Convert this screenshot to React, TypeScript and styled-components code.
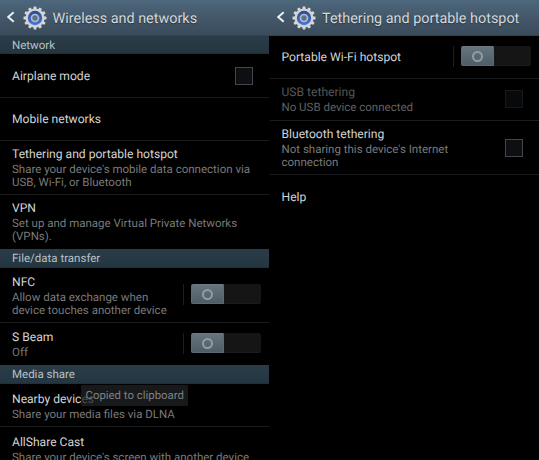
import React from 'react';
import styled, { createGlobalStyle } from 'styled-components';

const GlobalStyle = createGlobalStyle`
  * { box-sizing: border-box; }
  body {
    margin: 0;
    background: #000;
    font-family: Roboto, "Liberation Sans", sans-serif;
    text-rendering: geometricPrecision;
  }
`;

const Page = styled.main`
  position: relative;
  display: grid;
  grid-template-columns: 269px 270px;
  width: 539px;
  height: 460px;
  overflow: hidden;
  background: #000;
`;

const Panel = styled.section<{ $inset?: boolean }>`
  display: flex;
  flex-direction: column;
  padding-left: ${p => (p.$inset ? 0.5 : 0)}px;
  min-width: 0;
  overflow: hidden;
`;

const Header = styled.header<{ $inset?: boolean }>`
  flex: none;
  display: flex;
  align-items: center;
  height: 36px;
  margin-left: ${p => (p.$inset ? -0.5 : 0)}px;
  padding-left: ${p => (p.$inset ? 7.5 : 7)}px;
  background: linear-gradient(#4d677c, #44586a 50%, #3a4b5b);
  border-bottom: 1px solid #344350;
`;

const Heading = styled.h1`
  margin: 2px 0 0 6px;
  font-size: 14.4px;
  font-weight: 400;
  line-height: 20px;
  color: #d3d8dc;
  white-space: nowrap;
  text-shadow: 0 1px 1px #26323d;
`;

const SectionBar = styled.h2<{ $height: number }>`
  flex: none;
  margin: 0;
  height: ${p => p.$height}px;
  padding-left: 12px;
  background: linear-gradient(#2b3c49, #233640);
  border-bottom: 1px solid #20303a;
  font-size: 11.5px;
  font-weight: 400;
  line-height: 18px;
  color: #b9c1c5;
`;

const Row = styled.div<{ $height: number; $line?: boolean; $top: number }>`
  flex: none;
  display: flex;
  align-items: flex-start;
  height: ${p => p.$height}px;
  padding: ${p => p.$top}px 8px 0 12px;
  border-bottom: ${p => (p.$line ? '1px solid #1b1c1d' : '0')};
`;

const Copy = styled.div`
  flex: 1;
  min-width: 0;
`;

const Title = styled.div<{ $dim?: boolean }>`
  font-size: 12.1px;
  line-height: 16px;
  color: ${p => (p.$dim ? '#575757' : '#d4d4d4')};
  white-space: nowrap;
`;

const Summary = styled.div<{ $dim?: boolean }>`
  margin-top: 1px;
  font-size: 11.5px;
  line-height: 13.25px;
  color: ${p => (p.$dim ? '#626262' : '#7a7a7a')};
  white-space: pre;
`;

const Checkbox = styled.span<{ $dim?: boolean; $top: number }>`
  flex: none;
  width: 18px;
  height: 18px;
  margin: ${p => p.$top}px 8px 0 0;
  background: ${p => (p.$dim ? '#07090b' : '#0d0f12')};
  border: 1px solid ${p => (p.$dim ? '#17191b' : '#43474b')};
`;

const SwitchArea = styled.div<{ $top: number }>`
  flex: none;
  display: flex;
  width: 78px;
  height: 21px;
  margin-top: ${p => p.$top}px;
  border-left: 1px solid #1c1e20;
  padding-left: 7px;
`;

const SwitchTrack = styled.div`
  display: flex;
  width: 70px;
  height: 20px;
  border-radius: 2px;
  background: #151515;
  border-bottom: 1px solid #1c1c1c;
`;

const SwitchThumb = styled.div`
  display: flex;
  align-items: center;
  justify-content: center;
  width: 33px;
  height: 20px;
  border-radius: 2px 1px 1px 2px;
  background: linear-gradient(#65757f, #4e5d66);
  border: 1px solid #5c6b73;
  border-top-color: #6c7a82;
`;

const Ring = styled.span`
  width: 11px;
  height: 11px;
  border: 2px solid #929da3;
  border-radius: 50%;
`;

const Toast = styled.div`
  position: absolute;
  left: 81px;
  top: 385px;
  width: 107px;
  height: 21px;
  padding-left: 4.5px;
  border-radius: 1px;
  background: rgba(29, 32, 34, 0.78);
  font-size: 11.4px;
  line-height: 21px;
  color: #7e8183;
  white-space: nowrap;
`;

const BackSvg = styled.svg`
  flex: none;
  width: 8px;
  height: 12px;
  margin-bottom: 1px;
`;

const GearSvg = styled.svg`
  flex: none;
  width: 24px;
  height: 24px;
  margin-left: 7.5px;
`;

function BackIcon() {
  return (
    <BackSvg viewBox="0 0 8 12">
      <path d="M6.7 1.2 1.2 6l5.5 4.8" fill="none" stroke="#eef0f1" strokeWidth="2" />
    </BackSvg>
  );
}

const teeth = Array.from({ length: 12 }, (_, i) => i * 30);

function GearIcon({ id }: { id: string }) {
  return (
    <GearSvg viewBox="0 0 24 24">
      <defs>
        <linearGradient id={id} x1="0" y1="0" x2="0" y2="1">
          <stop offset="0" stopColor="#2b4796" />
          <stop offset="1" stopColor="#4479e0" />
        </linearGradient>
      </defs>
      {teeth.map(a => (
        <path key={a} d="M10 4 10.8.5h2.4L14 4Z" fill="#d8d8d6" transform={`rotate(${a} 12 12)`} />
      ))}
      <circle cx="12" cy="12" r="9.5" fill="#d2d3d3" />
      <circle cx="12" cy="12" r="7.2" fill={`url(#${id})`} />
      <circle cx="12" cy="12" r="3.5" fill="#5f7089" stroke="#b3bcc9" strokeWidth="1.7" />
    </GearSvg>
  );
}

function Switch({ top }: { top: number }) {
  return (
    <SwitchArea $top={top}>
      <SwitchTrack>
        <SwitchThumb><Ring /></SwitchThumb>
      </SwitchTrack>
    </SwitchArea>
  );
}

interface ItemProps {
  title: string;
  summary?: string;
  height: number;
  top: number;
  line?: boolean;
  dim?: boolean;
  children?: React.ReactNode;
}

function Item({ title, summary, height, top, line, dim, children }: ItemProps) {
  return (
    <Row $height={height} $top={top} $line={line}>
      <Copy>
        <Title $dim={dim}>{title}</Title>
        {summary && <Summary $dim={dim}>{summary}</Summary>}
      </Copy>
      {children}
    </Row>
  );
}

export default function App() {
  return (
    <>
      <GlobalStyle />
      <Page>
        <Panel>
          <Header>
            <BackIcon />
            <GearIcon id="gear-network" />
            <Heading>Wireless and networks</Heading>
          </Header>
          <SectionBar $height={18}>Network</SectionBar>
          <Item title="Airplane mode" height={44} top={14} line><Checkbox $top={-1} /></Item>
          <Item title="Mobile networks" height={43} top={13} line />
          <Item title="Tethering and portable hotspot" summary={'Share your device\'s mobile data connection via\nUSB, Wi-Fi, or Bluetooth'} height={54} top={5} line />
          <Item title="VPN" summary={'Set up and manage Virtual Private Networks\n(VPNs).'} height={54} top={5} />
          <SectionBar $height={19}>File/data transfer</SectionBar>
          <Item title="NFC" summary={'Allow data exchange when\ndevice touches another device'} height={55} top={6} line><Switch top={10} /></Item>
          <Item title="S Beam" summary="Off" height={42} top={6}><Switch top={4} /></Item>
          <SectionBar $height={19}>Media share</SectionBar>
          <Item title="Nearby devices" summary="Share your media files via DLNA" height={43} top={7} line />
          <Item title="AllShare Cast" summary="Share your device's screen with another device" height={43} top={7} />
        </Panel>
        <Panel $inset>
          <Header $inset>
            <BackIcon />
            <GearIcon id="gear-tethering" />
            <Heading>Tethering and portable hotspot</Heading>
          </Header>
          <Item title="Portable Wi-Fi hotspot" height={43} top={13} line><Switch top={-3} /></Item>
          <Item title="USB tethering" summary="No USB device connected" height={42} top={5} line dim><Checkbox $dim $top={6} /></Item>
          <Item title="Bluetooth tethering" summary={'Not sharing this device\'s Internet\nconnection'} height={54} top={5} line><Checkbox $top={13} /></Item>
          <Item title="Help" height={285} top={14} />
        </Panel>
        <Toast>Copied to clipboard</Toast>
      </Page>
    </>
  );
}
